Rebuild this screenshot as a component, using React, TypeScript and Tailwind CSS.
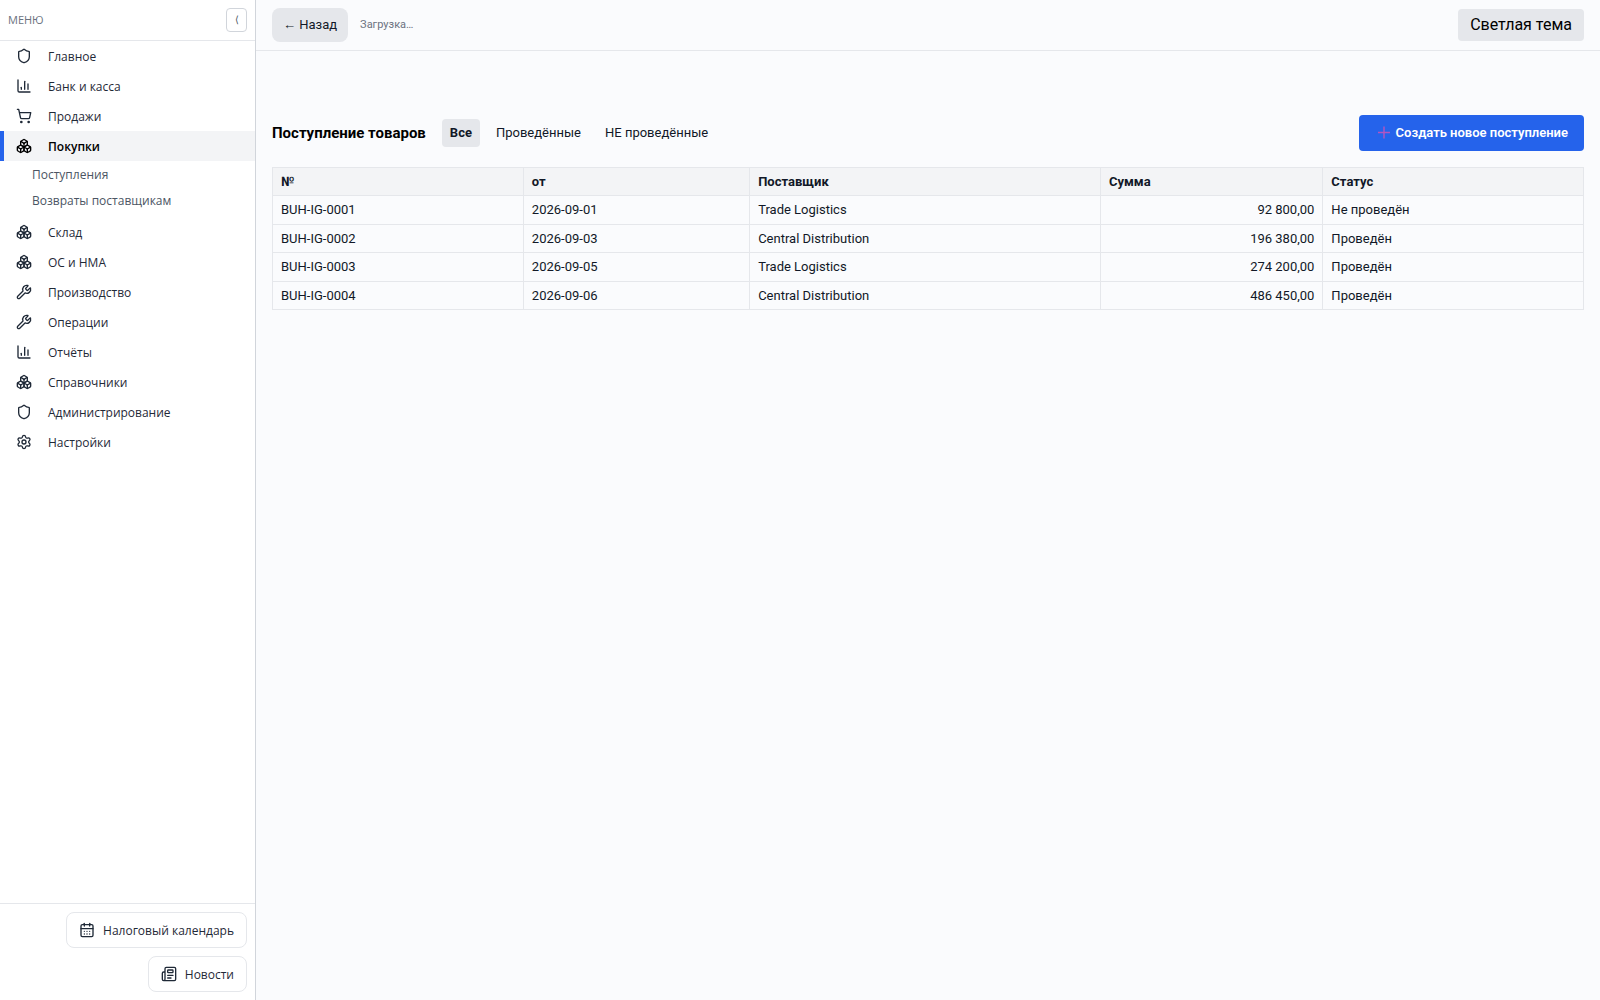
import { Shield, ChartColumn, ShoppingCart, Boxes, Wrench, Settings, CalendarDays, Newspaper } from "lucide-react";
import type { LucideIcon } from "lucide-react";

type MenuItem = { label: string; icon: LucideIcon; children?: string[] };

const menu: MenuItem[] = [
  { label: "Главное", icon: Shield },
  { label: "Банк и касса", icon: ChartColumn },
  { label: "Продажи", icon: ShoppingCart },
  { label: "Покупки", icon: Boxes, children: ["Поступления", "Возвраты поставщикам"] },
  { label: "Склад", icon: Boxes },
  { label: "ОС и НМА", icon: Boxes },
  { label: "Производство", icon: Wrench },
  { label: "Операции", icon: Wrench },
  { label: "Отчёты", icon: ChartColumn },
  { label: "Справочники", icon: Boxes },
  { label: "Администрирование", icon: Shield },
  { label: "Настройки", icon: Settings },
];

const receipts = [
  { no: "BUH-IG-0001", date: "2026-09-01", supplier: "Trade Logistics", sum: "92 800,00", status: "Не проведён" },
  { no: "BUH-IG-0002", date: "2026-09-03", supplier: "Central Distribution", sum: "196 380,00", status: "Проведён" },
  { no: "BUH-IG-0003", date: "2026-09-05", supplier: "Trade Logistics", sum: "274 200,00", status: "Проведён" },
  { no: "BUH-IG-0004", date: "2026-09-06", supplier: "Central Distribution", sum: "486 450,00", status: "Проведён" },
];

const columns = ["№", "от", "Поставщик", "Сумма", "Статус"];

function Sidebar() {
  return (
    <aside className="flex w-64 shrink-0 flex-col border-r border-[#d1d5db] bg-white font-['Open_Sans',sans-serif] text-xs text-[#1f2937]">
      <div className="flex h-[41px] shrink-0 items-center justify-between border-b border-[#e5e7eb] px-2">
        <span className="text-[11px] text-[#6b7280]">МЕНЮ</span>
        <button type="button" aria-label="Свернуть меню" className="flex h-6 w-[21px] items-center justify-center rounded border border-[#d1d5db] text-[10px] text-[#4b5563]">
          ⟨
        </button>
      </div>
      <nav className="flex-1">
        {menu.map(({ label, icon: Icon, children }) => (
          <div key={label}>
            <a
              href="#"
              className={
                children
                  ? "flex h-[30px] items-center gap-4 border-l-4 border-[#2563eb] bg-[#f3f4f6] pl-3 font-semibold text-black"
                  : "flex h-[30px] items-center gap-4 border-l-4 border-transparent pl-3"
              }
            >
              <Icon size={16} strokeWidth={2} />
              <span className="pt-px">{label}</span>
            </a>
            {children && (
              <div className="pt-px pb-[3px]">
                {children.map((child) => (
                  <a key={child} href="#" className="flex h-[26px] items-center pl-8 text-[#4b5563]">
                    {child}
                  </a>
                ))}
              </div>
            )}
          </div>
        ))}
      </nav>
      <div className="flex flex-col items-end gap-2 border-t border-[#e5e7eb] p-2">
        <button type="button" className="flex h-9 items-center gap-2 rounded-lg border border-[#e5e7eb] px-3">
          <CalendarDays size={16} />
          <span className="pt-px">Налоговый календарь</span>
        </button>
        <button type="button" className="flex h-9 items-center gap-2 rounded-lg border border-[#e5e7eb] px-3">
          <Newspaper size={16} />
          <span className="pt-px">Новости</span>
        </button>
      </div>
    </aside>
  );
}

export default function App() {
  return (
    <div className="flex min-h-screen bg-[#fafbfd] font-['Roboto',sans-serif] text-[#111827]">
      <Sidebar />
      <div className="flex min-w-0 flex-1 flex-col">
        <header className="flex h-[51px] items-center gap-3 border-b border-[#e5e7eb] px-4">
          <button type="button" className="h-[34px] rounded-lg bg-[#e5e7eb] px-[11px] text-[13px]">← Назад</button>
          <span className="text-[11px] text-[#6b7280]">Загрузка…</span>
          <button type="button" className="ml-auto h-8 rounded bg-[#e5e7eb] px-3 text-base text-black">Светлая тема</button>
        </header>
        <main className="px-4 pt-16">
          <div className="mb-4 flex items-center gap-4">
            <h1 className="text-[15px] font-bold text-black">Поступление товаров</h1>
            <div className="flex gap-2 text-[13px]">
              <button type="button" className="h-7 rounded bg-[#e5e7eb] px-2 font-bold">Все</button>
              <button type="button" className="h-7 rounded px-2">Проведённые</button>
              <button type="button" className="h-7 rounded px-2">НЕ проведённые</button>
            </div>
            <button type="button" className="ml-auto flex h-9 items-center gap-1 rounded bg-[#2563eb] px-4 text-[13px] font-semibold text-white">
              <svg width="17" height="16" viewBox="0 0 17 16" fill="none" stroke="#b455c0" strokeWidth="1.4" aria-hidden="true">
                <path d="M3 7.500h12M9 1.500v12" />
              </svg>
              Создать новое поступление
            </button>
          </div>
          <table className="w-full border-collapse text-[13px] leading-normal">
            <thead>
              <tr className="bg-[#f3f4f6] leading-[19px]">
                {columns.map((c) => (
                  <th key={c} className="border border-[#e5e7eb] px-2 py-1 text-left font-bold">{c}</th>
                ))}
              </tr>
            </thead>
            <tbody>
              {receipts.map((r) => (
                <tr key={r.no}>
                  <td className="border border-[#e5e7eb] px-2 py-1">{r.no}</td>
                  <td className="border border-[#e5e7eb] px-2 py-1">{r.date}</td>
                  <td className="border border-[#e5e7eb] px-2 py-1">{r.supplier}</td>
                  <td className="border border-[#e5e7eb] px-2 py-1 text-right">{r.sum}</td>
                  <td className="border border-[#e5e7eb] px-2 py-1">{r.status}</td>
                </tr>
              ))}
            </tbody>
          </table>
        </main>
      </div>
    </div>
  );
}
